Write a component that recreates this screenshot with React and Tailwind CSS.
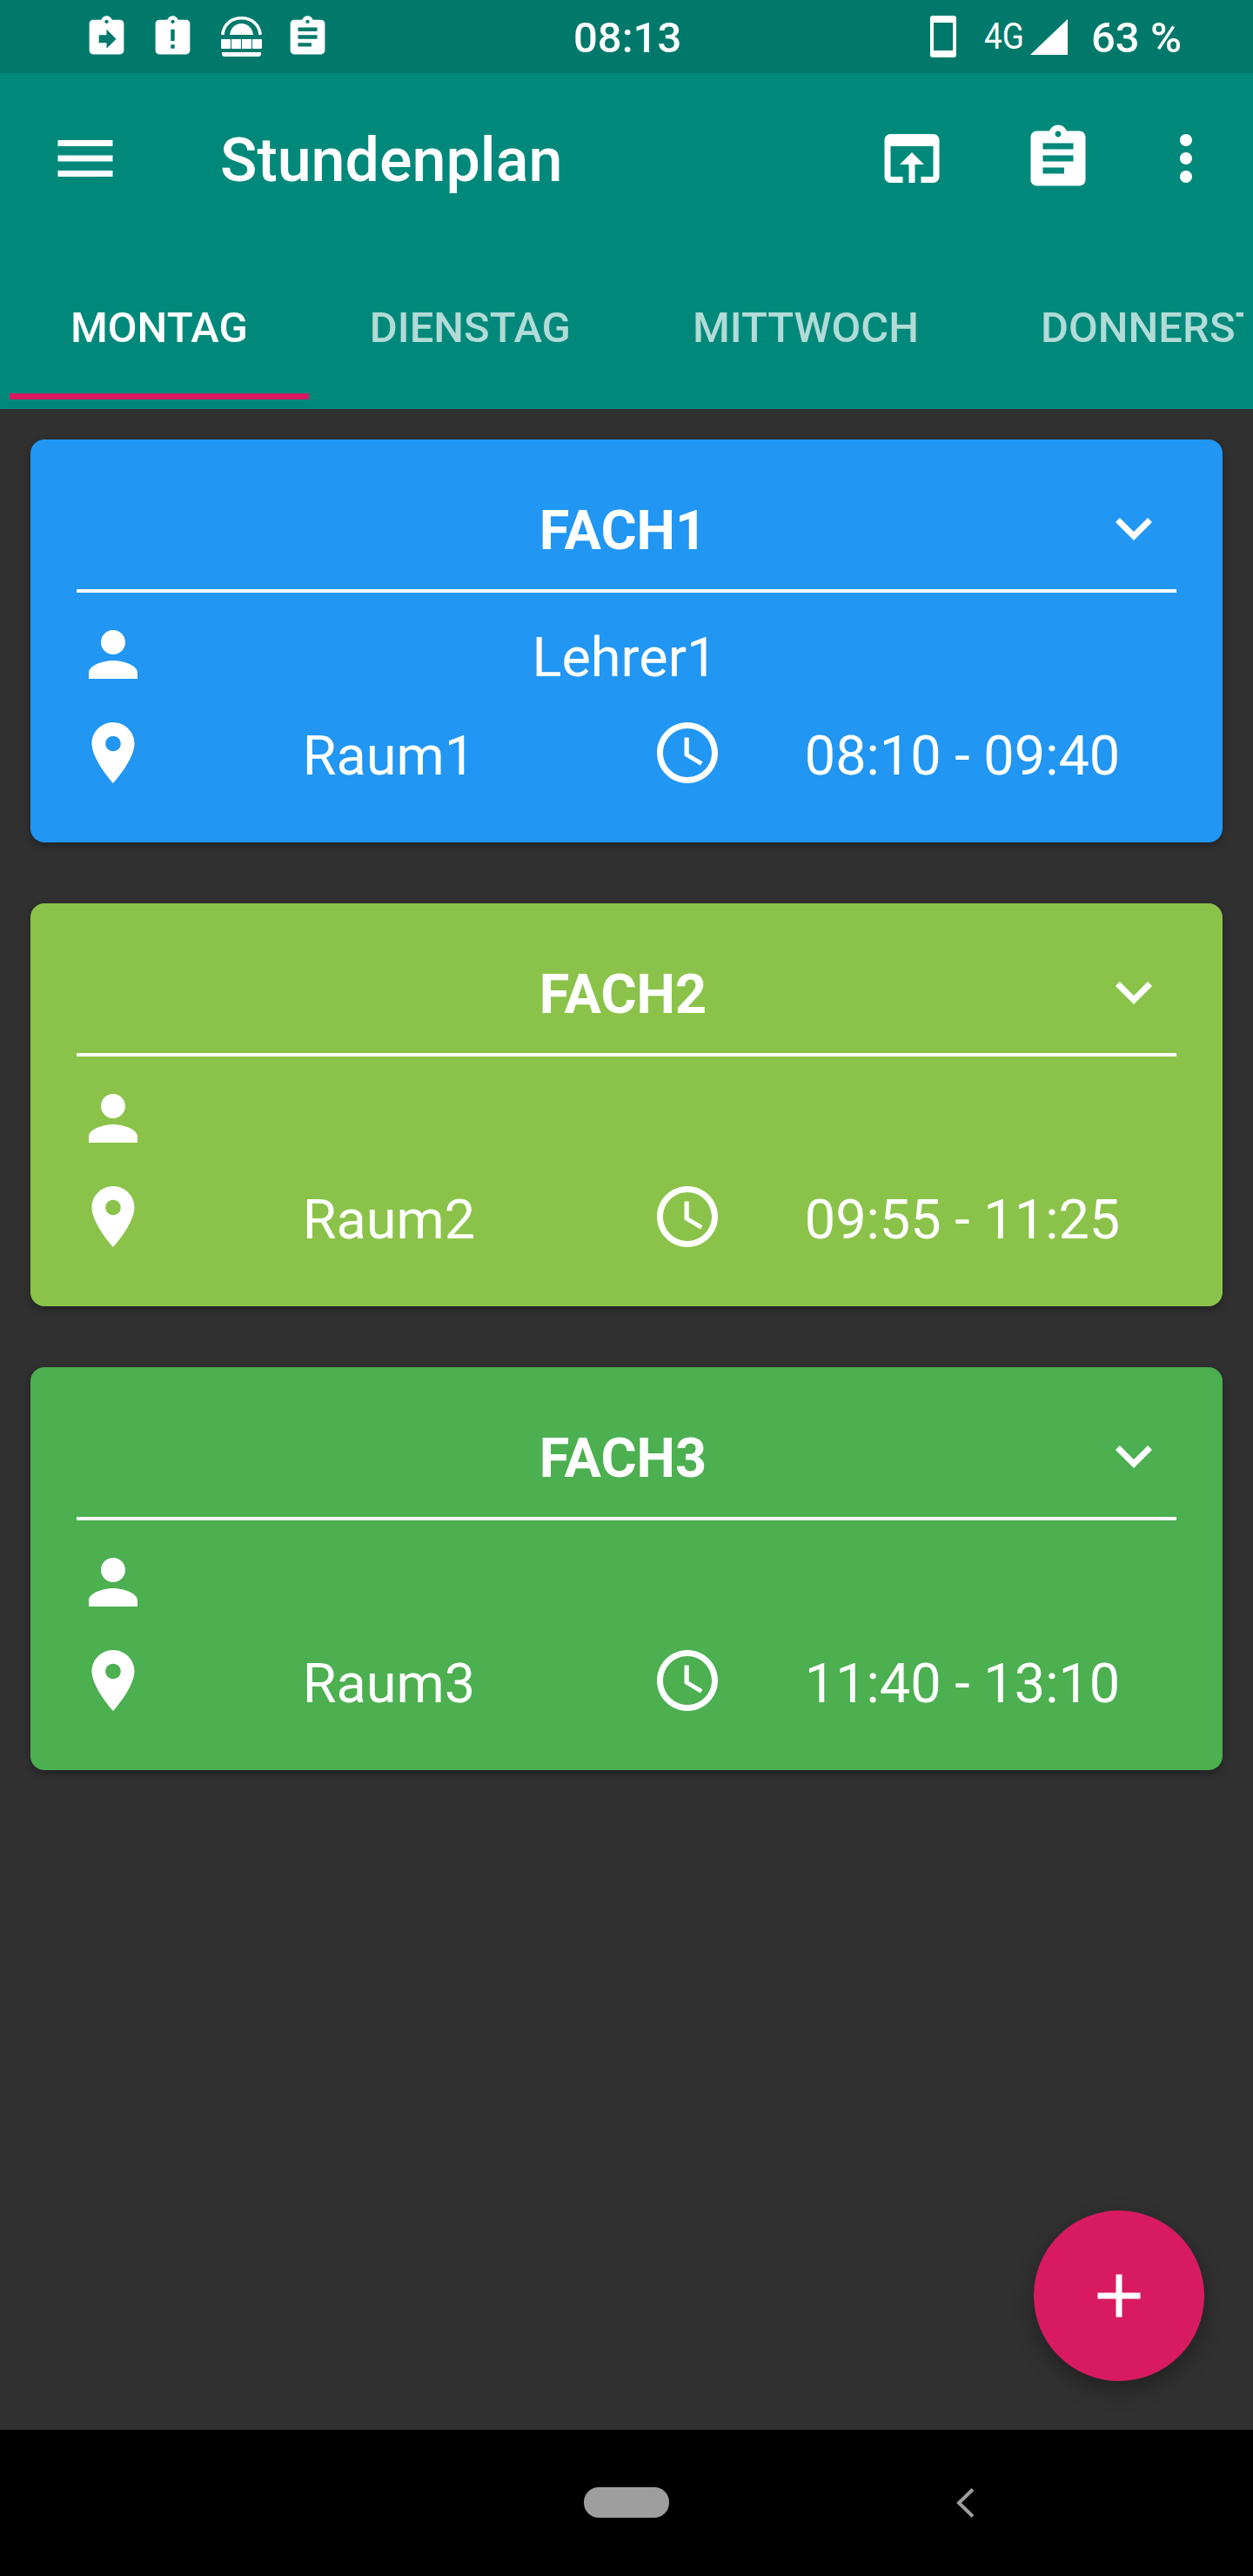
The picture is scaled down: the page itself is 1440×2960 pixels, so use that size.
import React from 'react';

const clip = 'M19 3h-4.18C14.4 1.84 13.3 1 12 1c-1.3 0-2.4.84-2.82 2H5c-1.1 0-2 .9-2 2v14c0 1.1.9 2 2 2h14c1.1 0 2-.9 2-2V5c0-1.1-.9-2-2-2z';
const ICONS = {
  assignment: clip + 'M12 3c.55 0 1 .45 1 1s-.45 1-1 1-1-.45-1-1 .45-1 1-1zM14 17H7v-2h7v2zM17 13H7v-2h10v2zM17 9H7V7h10v2z',
  returnRight: clip + 'M12 3c.55 0 1 .45 1 1s-.45 1-1 1-1-.45-1-1 .45-1 1-1zM8 15h4v3l5-5-5-5v3H8v4z',
  late: clip + 'M13 18h-2v-2h2v2zM13 14h-2V8h2v6zM12 5c-.55 0-1-.45-1-1s.45-1 1-1 1 .45 1 1-.45 1-1 1z',
  browser: 'M19 4H5c-1.11 0-2 .9-2 2v12c0 1.1.89 2 2 2h4v-2H5V8h14v10h-4v2h4c1.1 0 2-.9 2-2V6c0-1.1-.89-2-2-2zM12 10l-4 4h3v6h2v-6h3l-4-4z',
  more: 'M12 8c1.1 0 2-.9 2-2s-.9-2-2-2-2 .9-2 2 .9 2 2 2zM12 10c-1.1 0-2 .9-2 2s.9 2 2 2 2-.9 2-2-.9-2-2-2zM12 16c-1.1 0-2 .9-2 2s.9 2 2 2 2-.9 2-2-.9-2-2-2z',
  menu: 'M3 18h18v-2H3v2zM3 13h18v-2H3v2zM3 6v2h18V6H3z',
  chevron: 'M7.41 8.59L12 13.17l4.59-4.58L18 10l-6 6-6-6 1.41-1.41z',
  person: 'M12 12c2.21 0 4-1.79 4-4s-1.79-4-4-4-4 1.79-4 4 1.79 4 4 4zM12 14c-2.67 0-8 1.34-8 4v2h16v-2c0-2.66-5.33-4-8-4z',
  place: 'M12 2C8.13 2 5 5.13 5 9c0 5.25 7 13 7 13s7-7.75 7-13c0-3.87-3.13-7-7-7zM12 11.5c-1.38 0-2.5-1.12-2.5-2.5s1.12-2.5 2.5-2.5 2.5 1.12 2.5 2.5-1.12 2.5-2.5 2.5z',
  clock: 'M11.99 2C6.47 2 2 6.48 2 12s4.47 10 9.99 10C17.52 22 22 17.52 22 12S17.52 2 11.99 2zM12 20c-4.42 0-8-3.58-8-8s3.58-8 8-8 8 3.58 8 8-3.58 8-8 8zM12.5 7H11v6l5.25 3.15.75-1.23-4.5-2.67z',
  plus: 'M19 13h-6v6h-2v-6H5v-2h6V5h2v6h6v2z',
};

const Icon = ({ name, className }) => (
  <svg viewBox="0 0 24 24" className={className} fill="white" fillRule="evenodd">
    <path d={ICONS[name]} />
  </svg>
);

// the dome thing in the status bar, no icon package has it
const DomeIcon = () => (
  <svg viewBox="0 0 47 46" className="w-[47px] h-[46px] ml-[29px] mr-[26px] mt-[3px] shrink-0" fill="white">
    <path d="M1.8 21C3 9 12 1.8 23.5 1.8S44 9 45.2 21" fill="none" stroke="white" strokeWidth="3.6" />
    <path d="M10 21C11 13 16.500 8 23.500 8S36 13 37 21z" />
    <rect x="0" y="26" width="11" height="11" rx="1" />
    <rect x="12" y="26" width="11" height="11" />
    <rect x="24" y="26" width="11" height="11" />
    <rect x="36" y="26" width="11" height="11" rx="1" />
    <path d="M1 41h45v2a3 3 0 0 1-3 3H4a3 3 0 0 1-3-3z" />
  </svg>
);

const StatusBar = () => (
  <div className="h-[84px] shrink-0 bg-[#00796b] flex items-start text-white relative">
    <div className="flex pl-[96px] pt-[16px]">
      <Icon name="returnRight" className="w-[53px] h-[53px] mr-[23px]" />
      <Icon name="late" className="w-[53px] h-[53px]" />
      <DomeIcon />
      <Icon name="assignment" className="w-[53px] h-[53px]" />
    </div>
    <span className="absolute left-[659px] top-[15px] text-[49px] leading-[57px] font-medium">08:13</span>
    <div className="absolute left-[1069px] top-[18px] w-[30px] h-[48px] rounded-[3px] border-x-[4px] border-y-[8px] border-white" />
    <span className="absolute left-[1131px] top-[17px] text-[42px] leading-[50px] origin-left scale-x-[.88]">4G</span>
    <svg viewBox="0 0 43 41" className="absolute left-[1184px] top-[22px] w-[43px] h-[41px]" fill="white">
      <path d="M43 0v41H0z" />
    </svg>
    <span className="absolute left-[1254px] top-[15px] text-[49px] leading-[57px] font-medium">63 %</span>
  </div>
);

const AppBar = () => (
  <div className="h-[196px] shrink-0 flex items-center text-white">
    <Icon name="menu" className="w-[84px] h-[84px] ml-[56px] shrink-0" />
    <span className="ml-[113px] pt-[3px] text-[70px] leading-[84px] font-medium">Stundenplan</span>
    <div className="ml-auto flex items-center pr-[35px]">
      <Icon name="browser" className="w-[84px] h-[84px]" />
      <Icon name="assignment" className="w-[84px] h-[84px] ml-[84px]" />
      <Icon name="more" className="w-[84px] h-[84px] ml-[63px]" />
    </div>
  </div>
);

const TABS = ['MONTAG', 'DIENSTAG', 'MITTWOCH', 'DONNERSTAG'];

const TabBar = () => (
  <div className="h-[190px] shrink-0 mx-[11px] overflow-hidden flex">
    {TABS.map((tab, i) => (
      <div key={tab} className="relative h-[179px] px-[70px] pt-[68px] shrink-0">
        <span className={`block text-[49px] leading-[58px] font-medium whitespace-nowrap ${i === 0 ? 'text-white' : 'text-[#b2dbd7]'}`}>
          {tab}
        </span>
        {i === 0 && <div className="absolute left-0 right-0 bottom-0 h-[7px] bg-[#d81b60]" />}
      </div>
    ))}
  </div>
);

const LESSONS = [
  { name: 'FACH1', teacher: 'Lehrer1', room: 'Raum1', time: '08:10 - 09:40', color: 'bg-[#2196f3]' },
  { name: 'FACH2', teacher: '', room: 'Raum2', time: '09:55 - 11:25', color: 'bg-[#8bc34a]' },
  { name: 'FACH3', teacher: '', room: 'Raum3', time: '11:40 - 13:10', color: 'bg-[#4caf50]' },
];

const LessonCard = ({ lesson }) => (
  <div className={`${lesson.color} h-[463px] rounded-[16px] px-[53px] text-white shadow-[0_4px_8px_rgba(0,0,0,0.3)]`}>
    <div className="h-[172px] pt-[63px] flex items-start relative">
      <span className="w-full text-center text-[63px] leading-[84px] font-bold pr-[8px]">{lesson.name}</span>
      <Icon name="chevron" className="absolute left-[1173px] top-[60px] w-[84px] h-[84px]" />
    </div>
    <div className="h-[4px] bg-white" />
    <div className="flex items-center h-[84px] mt-[29px]">
      <Icon name="person" className="w-[84px] h-[84px] shrink-0" />
      <span className="w-[1092px] text-center text-[63px] leading-[84px] pt-[7px]">{lesson.teacher}</span>
    </div>
    <div className="flex items-center h-[84px] w-[1292px] mt-[29px]">
      <Icon name="place" className="w-[84px] h-[84px] shrink-0" />
      <span className="w-[550px] text-center text-[63px] leading-[84px] pt-[7px]">{lesson.room}</span>
      <Icon name="clock" className="w-[84px] h-[84px] shrink-0 ml-[26px]" />
      <span className="w-[548px] text-center text-[63px] leading-[84px] pt-[7px]">{lesson.time}</span>
    </div>
  </div>
);

export default function App() {
  return (
    <div className="relative w-[1440px] h-[2960px] flex flex-col overflow-hidden bg-[#303030] font-['Roboto',sans-serif]">
      <StatusBar />
      <div className="bg-[#00897b] shrink-0">
        <AppBar />
        <TabBar />
      </div>

      <div className="flex-1 px-[35px] pt-[35px] flex flex-col gap-[70px]">
        {LESSONS.map((lesson) => (
          <LessonCard key={lesson.name} lesson={lesson} />
        ))}
      </div>

      <div className="h-[168px] shrink-0 bg-black relative">
        <div className="absolute left-[671px] top-[66px] w-[98px] h-[35px] rounded-[17px] bg-[#9e9e9e]" />
        <svg viewBox="0 0 21 34" className="absolute left-[1099px] top-[67px] w-[21px] h-[34px]" fill="none" stroke="#9e9e9e" strokeWidth="4">
          <path d="M19 1.500L3 17l16 15.500" />
        </svg>
      </div>

      <button className="absolute left-[1188px] top-[2540px] w-[196px] h-[196px] rounded-full bg-[#d81b60] flex items-center justify-center shadow-[0_10px_24px_rgba(0,0,0,0.3)]">
        <Icon name="plus" className="w-[84px] h-[84px]" />
      </button>
    </div>
  );
}
